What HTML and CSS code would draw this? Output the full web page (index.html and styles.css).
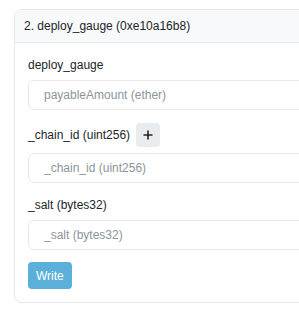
FILE: index.html
```html
<!DOCTYPE html>
<html lang="en">
<head>
    <meta charset="UTF-8">
    <meta name="viewport" content="width=device-width, initial-scale=1.0">
    <title>deploy_gauge</title>
    <link rel="stylesheet" href="styles.css">
</head>
<body>

    <div class="card">
        <div class="card-header">2. deploy_gauge (0xe10a16b8)</div>

        <div class="card-body">
            <div class="field">
                <div class="field-label">deploy_gauge</div>
                <input class="field-input" type="text" placeholder="payableAmount (ether)">
            </div>

            <div class="field">
                <div class="field-label">
                    <span>_chain_id (uint256)</span>
                    <button class="add-btn" type="button" aria-label="add">
                        <svg width="10" height="10" viewBox="0 0 10 10">
                            <path d="M5 0.5V9.5M0.5 5H9.5" stroke="#1f2328" stroke-width="1.6" fill="none"/>
                        </svg>
                    </button>
                </div>
                <input class="field-input" type="text" placeholder="_chain_id (uint256)">
            </div>

            <div class="field">
                <div class="field-label">_salt (bytes32)</div>
                <input class="field-input" type="text" placeholder="_salt (bytes32)">
            </div>

            <button class="write-btn" type="button">Write</button>
        </div>
    </div>

</body>
</html>
```

FILE: styles.css
```css
/* --- Write contract card --- */
html {
    overflow: hidden;
}

body {
    font-family: "Liberation Sans", Arial, sans-serif;
    font-size: 12px;
    color: #212529;
    background-color: #fff;
    margin: 0;
    padding: 9px 0 0 14px;
}

.card {
    width: 330px;
    border: 1px solid #e6e8eb;
    border-radius: 8px;
    overflow: hidden;
}

.card-header {
    background-color: #f8f9fa;
    border-bottom: 1px solid #e6e8eb;
    padding: 8px 9px;
    line-height: 16px;
}

.card-body {
    padding: 13px;
}

.field {
    margin-bottom: 13px;
}

.field-label {
    display: flex;
    align-items: center;
    line-height: 18px;
    margin-bottom: 6px;
}

/* Nút thêm phần tử (dấu +) */
.add-btn {
    display: flex;
    align-items: center;
    justify-content: center;
    width: 24px;
    height: 24px;
    margin-left: 6px;
    padding: 0;
    border: none;
    border-radius: 4px;
    background-color: #e9ecef;
    cursor: pointer;
}

.field-input {
    display: block;
    box-sizing: border-box;
    width: 100%;
    height: 30px;
    padding: 0 15px;
    border: 1px solid #e6e8eb;
    border-radius: 6px;
    font-family: inherit;
    font-size: 12px;
    color: #212529;
    outline: none;
}

.field-input::placeholder {
    color: #8c949c;
}

.write-btn {
    display: block;
    height: 27px;
    margin-top: -1px;
    padding: 0 8px;
    border: none;
    border-radius: 4px;
    background-color: #5bb0da;
    color: #fff;
    font-family: inherit;
    font-size: 12px;
    cursor: pointer;
}
```
